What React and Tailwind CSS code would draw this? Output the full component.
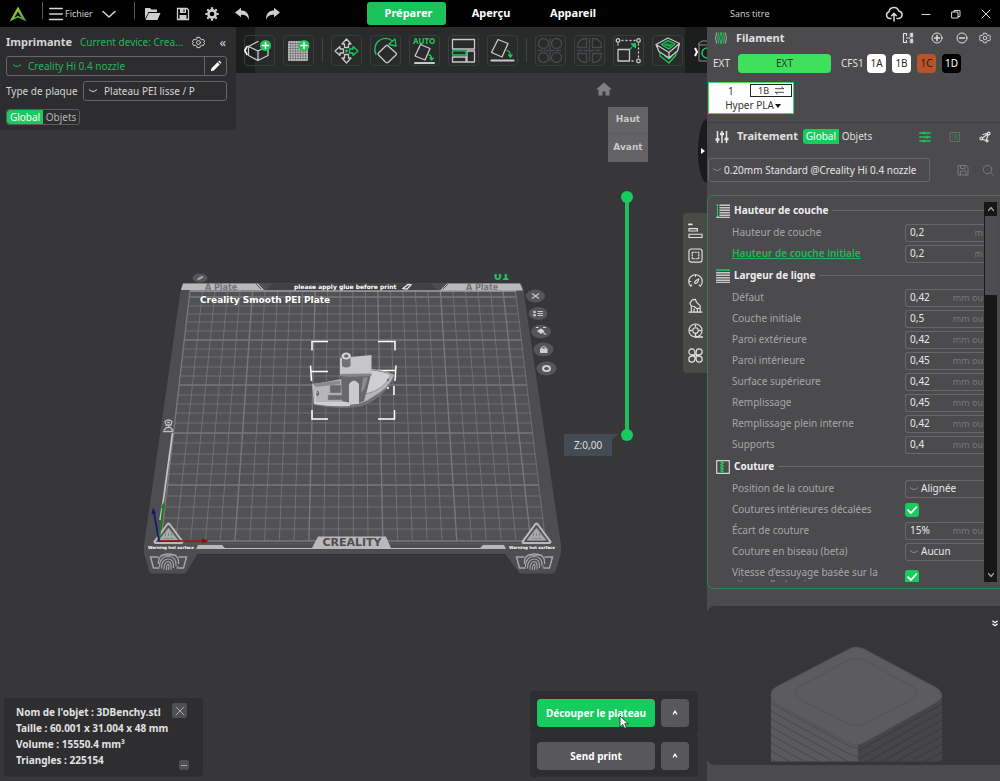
import React from "react";

function Icon({ box = 24, className = "", children, width = 1.5 }) {
  return (
    <svg
      viewBox={`0 0 ${box} ${box}`}
      className={`shrink-0 ${className}`}
      fill="none"
      stroke="currentColor"
      strokeWidth={width}
      strokeLinecap="round"
      strokeLinejoin="round"
      aria-hidden="true"
    >
      {children}
    </svg>
  );
}

const GREEN = "#1fc75c";

const Chevron = ({ className = "" }) => (
  <Icon box={12} className={className} width={1.2}>
    <path d="M1.5 4.5 Q6 9 10.5 4.5" />
  </Icon>
);

const GearIcon = ({ className = "" }) => (
  <Icon className={className} width={1.8}>
    <path d="M9.5 2.5h5l1 3 2.6 1.5 3.1-.6 2 4-2 1.6 2 1.6-2 4-3.1-.6-2.6 1.5-1 3h-5l-1-3-2.6-1.5-3.1.6-2-4 2-1.6-2-1.6 2-4 3.1.6L8.500 5.500z" />
    <circle cx="12" cy="12" r="3.600" />
  </Icon>
);

/* ---------- title bar ---------- */

function TitleBar() {
  return (
    <header className="flex h-[27px] shrink-0 items-center justify-between bg-black text-[#d8d8d8]">
      <div className="flex w-[367px] items-center">
        <svg viewBox="0 0 18 16" className="ml-[9px] h-4 w-[18px]" aria-hidden="true">
          <defs>
            <linearGradient id="brand" x1="0" y1="0" x2="1" y2="1">
              <stop offset="0" stopColor="#b5d43a" />
              <stop offset="1" stopColor="#3fa047" />
            </linearGradient>
          </defs>
          <path d="M9 .5 17.500 15.500 9 11.500 .5 15.500zM9 5.500 5.300 11.800 9 9.800 12.700 11.800z" fill="url(#brand)" fillRule="evenodd" />
        </svg>
        <span className="mb-1.5 ml-[15px] h-[17px] w-px bg-[#5a5a5a]" />
        <button className="flex items-center pl-[6px] font-['Open_Sans'] text-[9px]">
          <Icon box={14} className="h-[14px] w-[14px]" width={1.3}>
            <path d="M.7 1.500H13.300M.7 7H13.300M.7 12.500H13.300" />
          </Icon>
          <span className="ml-[2px]">Fichier</span>
          <Icon box={14} className="ml-[9px] h-[14px] w-[14px]" width={1.5}>
            <path d="M1 4.500 7 10 13 4.500" />
          </Icon>
        </button>
        <span className="mb-1.5 ml-[18px] h-[17px] w-px bg-[#5a5a5a]" />
        <div className="ml-[9px] flex items-center gap-[15px]">
          <button aria-label="Ouvrir">
            <svg viewBox="0 0 17 14" className="h-[14px] w-[17px]" fill="#cfcfcf" aria-hidden="true">
              <path d="M1 12V1.500Q1 1 1.500 1H6L7.500 2.500H13V5H4.500z" />
              <path d="M4.800 6H16.500L13.500 13H1.500z" />
            </svg>
          </button>
          <button aria-label="Enregistrer">
            <svg viewBox="0 0 14 14" className="h-[14px] w-[14px]" aria-hidden="true">
              <path d="M1.500 1.500h9.500l1.500 1.500v9.500H1.500z" fill="none" stroke="#cfcfcf" strokeWidth="1.300" />
              <path d="M4 2h6v4H4zM3.500 8h7v4h-7z" fill="#cfcfcf" />
              <path d="M7.500 2.500h1v2.500h-1z" fill="#000" />
            </svg>
          </button>
          <button aria-label="Paramètres">
            <svg viewBox="0 0 14 14" className="h-[14px] w-[14px]" fill="none" stroke="#cfcfcf" aria-hidden="true">
              <circle cx="7" cy="7" r="3.600" strokeWidth="2.600" />
              <path d="M7 .3v2M7 11.700v2M.3 7h2M11.700 7h2M2.300 2.300l1.400 1.400M10.300 10.300l1.400 1.400M2.300 11.700l1.400-1.400M10.300 3.700l1.400-1.400" strokeWidth="2.200" />
            </svg>
          </button>
          <button aria-label="Annuler">
            <svg viewBox="0 0 16 14" className="h-[14px] w-4" fill="#cfcfcf" aria-hidden="true">
              <path d="M1 5.500 7 .8V3.500C12 3.500 15 6 15 13 13.500 9 11 7.800 7 7.800V10.300z" />
            </svg>
          </button>
          <button aria-label="Rétablir">
            <svg viewBox="0 0 16 14" className="h-[14px] w-4" fill="#cfcfcf" aria-hidden="true">
              <path d="M15 5.500 9 .8V3.500C4 3.500 1 6 1 13 2.500 9 5 7.800 9 7.800V10.300z" />
            </svg>
          </button>
        </div>
      </div>

      <nav className="flex items-center text-[12px] font-bold text-white">
        <button className="h-[23px] w-[79px] rounded-[3px] bg-[#1bc15b] pl-1 text-[11px]">Préparer</button>
        <button className="w-[90px] text-[11px]">Aperçu</button>
        <button className="w-[74px] text-[11px]">Appareil</button>
      </nav>

      <div className="flex flex-1 items-center justify-between pl-[120px] pr-[9px]">
        <span className="font-['Open_Sans'] text-[9px]">Sans titre</span>
        <div className="flex items-center gap-[18px]">
          <button aria-label="Envoyer vers le nuage">
            <Icon box={18} className="h-[18px] w-[18px]" width={1.5}>
              <path d="M6 13.500H4.500A3.500 3.500 0 0 1 4 6.700 5 5 0 0 1 13.700 6 3.800 3.800 0 0 1 14 13.500H12M9 16V8.500M6.700 10.700 9 8.400l2.300 2.300" />
            </Icon>
          </button>
          <button aria-label="Réduire">
            <Icon box={10} className="h-[10px] w-[10px]" width={1}><path d="M1 5.500h8" /></Icon>
          </button>
          <button aria-label="Restaurer" className="ml-[2px]">
            <Icon box={10} className="h-[10px] w-[10px]" width={1}>
              <path d="M1 3h6v6H1zM3 3V1.500h6v6H7" />
            </Icon>
          </button>
          <button aria-label="Fermer" className="ml-[2px]">
            <Icon box={10} className="h-[10px] w-[10px]" width={1}><path d="M1 1l8 8M9 1L1 9" /></Icon>
          </button>
        </div>
      </div>
    </header>
  );
}

/* ---------- printer panel ---------- */

function ScopeToggle({ objectsBoxed }) {
  return (
    <div
      className={
        objectsBoxed
          ? "flex h-4 w-fit overflow-hidden rounded-[3px] border border-[#5b5b5d] leading-[14px]"
          : "flex h-[15px] w-fit text-[10px] leading-[15px]"
      }
    >
      <button className="w-9 rounded-l-[3px] bg-[#17cc5f] text-[10px] text-white">Global</button>
      <button className={objectsBoxed ? "w-9 text-[10px] text-[#b4b4b4]" : "w-9 text-[#dedede]"}>Objets</button>
    </div>
  );
}

function PrinterPanel() {
  return (
    <section className="h-[103px] w-[236px] shrink-0 bg-[#2d2d2f] pl-[6px] pr-[9px] pt-[6px] text-[#d5d5d5]">
      <div className="flex h-[18px] items-center">
        <h2 className="text-[11px] font-bold">Imprimante</h2>
        <span className="ml-2 text-[10px] text-[#27b35c]">Current device: Crea...</span>
        <button className="ml-auto" aria-label="Réglages imprimante"><GearIcon className="h-[13px] w-[13px]" /></button>
        <button className="ml-[14px] mr-px text-[13px] leading-none" aria-label="Replier">«</button>
      </div>
      <div className="mt-[5px] flex h-5 rounded-[3px] border border-[#666668]">
        <div className="flex flex-1 items-center pl-[5px] text-[#27b35c]">
          <Chevron className="h-[10px] w-[10px]" />
          <select aria-label="Imprimante" className="ml-[6px] flex-1 appearance-none bg-transparent text-[10px] outline-none">
            <option>Creality Hi 0.4 nozzle</option>
          </select>
        </div>
        <button className="flex w-[22px] items-center justify-center border-l border-[#666668]" aria-label="Modifier">
          <svg viewBox="0 0 12 12" className="h-3 w-3" fill="#fff" aria-hidden="true">
            <path d="M.8 11.200 1.500 8.200 7.500 2.200 9.800 4.500 3.800 10.500zM8.200 1.500 9.300.6 11.400 2.700 10.500 3.800z" />
          </svg>
        </button>
      </div>
      <div className="mt-[5px] flex h-5 items-center">
        <label htmlFor="plate" className="w-[77px] text-[10px]">Type de plaque</label>
        <div className="flex h-5 flex-1 items-center rounded-[3px] border border-[#666668] pl-[4px]">
          <Chevron className="h-[10px] w-[10px]" />
          <select id="plate" className="ml-[6px] flex-1 appearance-none bg-transparent text-[10px] outline-none">
            <option>Plateau PEI lisse / P</option>
          </select>
        </div>
      </div>
      <div className="mt-[8px]"><ScopeToggle objectsBoxed /></div>
    </section>
  );
}

/* ---------- 3D toolbar ---------- */

const Plus = ({ x, y }) => (
  <g>
    <circle cx={x} cy={y} r="5.500" fill={GREEN} stroke="none" />
    <path d={`M${x - 3} ${y}h6M${x} ${y - 3}v6`} stroke="#fff" strokeWidth="1.500" />
  </g>
);

const four = [[8.500, 8.500], [21.500, 8.500], [8.500, 22.500], [21.500, 22.500]];

const TOOLS = [
  {
    name: "Ajouter un objet",
    draw: (
      <>
        <path d="M4.500 11.500 14 6.500M4.500 11.500v9l9.500 5 10-5v-7M4.500 11.500l9.500 4.500 5-2.500M14 16v9.500" />
        <Plus x={21.500} y={10.500} />
        <path d="M3 11.500 .8 15.500 3 19.500" stroke="#fff" strokeWidth="1.600" />
      </>
    ),
  },
  {
    name: "Ajouter un plateau",
    draw: (
      <>
        <rect x="5" y="6" width="20" height="20" rx="1.500" fill="#bdbdbd" stroke="none" />
        <path d="M7.500 6v20M10 6v20M12.500 6v20M15 6v20M17.500 6v20M20 6v20M22.500 6v20M5 8.500h20M5 11h20M5 13.500h20M5 16h20M5 18.500h20M5 21h20M5 23.500h20" stroke="#555" strokeWidth=".5" />
        <Plus x={21} y={10.500} />
      </>
    ),
    end: true,
  },
  {
    name: "Déplacer",
    draw: (
      <>
        <path d="M15.500 4l4.500 5h-2.500v3.500h-4V9H11zM15.500 28l4.500-5h-2.500v-3.500h-4V23H11zM4 16l5-4.500V14h3.500v4H9v2.500z" />
        <path d="M27 16l-5-4.500V14h-3.500v4H22v2.500z" stroke={GREEN} />
        <path d="M14.500 16h2M15.500 15v2" stroke={GREEN} />
      </>
    ),
  },
  {
    name: "Pivoter",
    draw: (
      <>
        <path d="M17.500 10.500 26 18Q27 19 26 20L18 27.500Q17 28.200 16 27.500L8.500 20Q7.500 19 8.500 18L16 10.700Q16.700 10 17.500 10.500z" />
        <path d="M6 19.500C3.500 14 5 8 10 5 14 3 19 3 22.500 6M25 4 18.700 9.300 26 11z" stroke={GREEN} />
      </>
    ),
  },
  {
    name: "Orientation automatique",
    draw: (
      <>
        <text x="4" y="9" fontSize="8" fontWeight="700" fill={GREEN} stroke="none" fontFamily="Noto Sans">AUTO</text>
        <path d="M11.500 9.500 21 13.500 16 25 6 21z" />
        <path d="M6 28h19" strokeWidth="2" />
        <path d="M20 20q2.500 0 2.500 4M21 23l1.700 2 1.500-2" stroke={GREEN} />
      </>
    ),
  },
  {
    name: "Organiser",
    draw: (
      <>
        <path d="M4.500 4.500h22v9.500h-22zM19 16h7.500v11H19zM4.500 22H18v5H4.500z" />
        <path d="M4.500 15.800H18V20H4.500z" stroke={GREEN} />
      </>
    ),
  },
  {
    name: "Poser sur une face",
    draw: (
      <>
        <path d="M11 4.500 21 8.500 15 22 4.500 17.500z" />
        <path d="M4.500 25.500h22" strokeWidth="2.200" />
        <path d="M20 15.500q3.500 1 3.500 6M21.500 20l2 2.200 1.500-2.400" stroke={GREEN} />
      </>
    ),
    end: true,
  },
  {
    name: "Séparer en objets",
    dim: true,
    draw: (
      <>
        {four.map(([x, y]) => <circle key={`${x}-${y}`} cx={x} cy={y} r="5" />)}
        <path d="M15 4v23M3.500 15.500h23" strokeDasharray="4 2" />
      </>
    ),
  },
  {
    name: "Séparer en pièces",
    dim: true,
    draw: (
      <>
        <path d="M12.500 3.500V12.500H3.500Q3.500 3.500 12.500 3.500zM18.500 3.500V12.500H27.500Q27.500 3.500 18.500 3.500zM12.500 27.500V18.500H3.500Q3.500 27.500 12.500 27.500zM18.500 27.500V18.500H27.500Q27.500 27.500 18.500 27.500z" />
        <path d="M15.500 4v23M4 15.500h23" strokeDasharray="4 2" />
      </>
    ),
  },
  {
    name: "Mettre à l'échelle",
    draw: (
      <>
        <path d="M5 14.500h11.500V26H5z" />
        <circle cx="5" cy="5.500" r="1.800" /><circle cx="25.500" cy="5.500" r="1.800" /><circle cx="25.500" cy="26" r="1.800" />
        <path d="M9 5.500h13M25.500 9v13M19 26h3M5 9v3" strokeDasharray="1 3" />
        <path d="M17 14 21.500 10" stroke={GREEN} strokeDasharray="2 2" />
        <path d="M22.500 9v3.500L18.500 9z" fill={GREEN} stroke={GREEN} />
      </>
    ),
  },
  {
    name: "Calques",
    draw: (
      <>
        <path d="M8 21l9 7 7-8M8 21v-3M24 20v-3M13 21l4 3 3-3" stroke={GREEN} />
        <path d="M4 9.500 16 3 27.500 8.500 17 17.500zM4 9.500l3 7 10 6.500 8.500-7 2-7.500M17 17.500V23" />
        <path d="M9.500 9.500l6.500-4 7 3.500-6 5z" fill="#17552f" stroke={GREEN} />
        <path d="M13 10l2-.6 2 1.400 2-1" stroke={GREEN} />
      </>
    ),
  },
];

function Toolbar() {
  return (
    <div className="relative flex h-[46px] min-w-0 flex-1 items-center gap-2 overflow-hidden bg-[#292a2a] pl-[8px] text-[#c9c9c9]">
      <span className="absolute inset-y-0 left-0 w-[19px] bg-[#1c1d1d]" />
      {TOOLS.map((tool) => (
        <React.Fragment key={tool.name}>
          <button
            aria-label={tool.name}
            className={`relative h-[31px] w-[31px] shrink-0 rounded-[4px] border border-[#3b3c3d] ${tool.dim ? "text-[#47494c]" : ""}`}
          >
            <Icon box={31} className="-ml-px -mt-px h-[31px] w-[31px]" width={1.3}>{tool.draw}</Icon>
          </button>
          {tool.end && <span className="h-6 w-px shrink-0 bg-[#434445]" />}
        </React.Fragment>
      ))}
      <button aria-label="Plus d'outils" className="-ml-[6px] flex h-full w-[23px] shrink-0 items-center bg-[#1c1d1d] pl-[9px]">
        <svg viewBox="0 0 14 31" className="h-[31px] w-[14px]" fill="none" aria-hidden="true">
          <path d="M4 9 8 6h8M5 9v17h12M5 10h10" stroke="#8d8d8d" />
          <circle cx="13" cy="18" r="5" stroke={GREEN} strokeWidth="1.500" />
          <path d="M1 13l2 4-2 4" stroke="#fff" strokeWidth="2" />
        </svg>
      </button>
    </div>
  );
}

/* ---------- build plate drawing ---------- */

const ROWS = [297, 306, 314, 322, 331, 340, 349, 357, 367, 376, 385, 395, 404, 413, 423, 433, 443, 454, 464, 474, 485, 496, 507, 518, 529, 541];
const COLS = Array.from({ length: 27 }, (_, i) => i);
const leftAt = (y) => 190 - ((y - 291) * 29) / 250;
const rightAt = (y) => 515.5 + ((y - 291) * 30) / 250;

function HotSign({ x }) {
  return (
    <g transform={`translate(${x} 0)`} strokeLinejoin="round">
      <path d="M0 524.500 13 542H-13z" fill="#5a5a5c" stroke="#b9b9bb" strokeWidth="4" />
      <path d="M0 525 12 541.500H-12z" fill="#5c5c5e" stroke="#4b4b4d" strokeWidth="1" />
      <path d="M0 528.500 9 540H-9z" fill="#a9a9ab" stroke="#a9a9ab" />
      <path d="M-3 533v3M0 533v3M3 533v3M-5 538.500H5" stroke="#7c7c7e" strokeWidth=".8" />
    </g>
  );
}

function Finger({ x }) {
  return (
    <g transform={`translate(${x} 562)`} fill="none" stroke="#a5a5ad">
      <path d="M-10-5H-18L-15 6H-9M10-5H18L15 6H9" strokeWidth="1.500" />
      <path d="M-10 2Q-11-8 0-8 11-8 10 2" strokeWidth="1.300" />
      <path d="M-9 5Q-9-5.500 0-5.500 8-5.500 7.500 4" strokeWidth="1.200" />
      <path d="M-7 6.500Q-7-3 0-3 5.500-3 5 6" strokeWidth="1.200" />
      <path d="M-4.500 7.500Q-4.500-.5 0-.5 3-.5 2.500 7.500M-2 8Q-2 2 0 2 .8 3 0 8" strokeWidth="1.100" />
      <path d="M8 6.500 9.500 3.500M-8-6 8-7" strokeWidth=".8" />
    </g>
  );
}

function BuildPlate() {
  return (
    <svg viewBox="0 27 707 754" className="absolute inset-0 h-full w-full" aria-label="Plateau d'impression">
      <path d="M187 283H518Q522 283 523 287L561 545V553L556 570Q555 573.500 551 573.500H521Q519 573.500 518 571L506 555H197L187 571Q186 573.500 183 573.500H153Q150 573.500 149 571L144 553V545L181 288Q182 283 187 283z" fill="#4e4e50" />
      <path d="M197 554.500H506" stroke="#2f2f31" />
      <path d="M191 291H515.500L545.500 541H161z" fill="#525254" />
      <g stroke="#77777c" fill="none">
        {ROWS.map((y, i) => (
          <path key={y} d={`M${leftAt(y)} ${y}H${rightAt(y)}`} strokeWidth={i % 5 === 0 ? 1.3 : 0.8} />
        ))}
        {COLS.map((i) => (
          <path key={i} d={`M${190 + i * 12.52} 291L${161 + i * 14.79} 541`} strokeWidth={i % 5 === 0 ? 1.4 : 0.8} />
        ))}
      </g>
      <path d="M190 291H516" stroke="#c4c4c6" strokeWidth="1.200" />
      <path d="M183 283.500H258L264 290H181z M447 283.500H520L523 290.500H440z" fill="#b9b9bb" />
      <path d="M272 283.500H430L438 290H266z" fill="#414143" />
      <path d="M256 284l5 5M261 284l5 5M448 284l-5 5" stroke="#59595b" />
      <g fontFamily="DejaVu Sans" fontWeight="700">
        <text x="205" y="290" fontSize="8" fill="#727274">A Plate</text>
        <text x="466" y="290" fontSize="8" fill="#727274">A Plate</text>
        <text x="294" y="289" fontSize="6" fill="#fff">please apply glue before print</text>
        <text x="200" y="303" fontSize="9" fill="#fff">Creality Smooth PEI Plate</text>
      </g>
      <path d="M403 288.500 408 284.500 411 285 407 289z" fill="none" stroke="#eee" strokeWidth="1.200" />
      <clipPath id="below"><path d="M490 274h25v8h-25z" /></clipPath>
      <text x="494" y="280" fontSize="11" fontWeight="700" fontFamily="DejaVu Sans" fill="#1fc75c" clipPath="url(#below)">01</text>

      <path d="M172.500 433 163 503 160 520" stroke="#c2c2c4" strokeWidth="1.800" fill="none" />
      <g stroke="#bdbdbf" fill="none" strokeWidth="1.300">
        <path d="M165 421.500Q168.500 418.500 172 421.500L171 425H166zM167 422.500h3" />
        <path d="M168.500 425v2.500M164 430l2.500-2.500h4l2.500 3M163 431.500h10" />
      </g>

      <path d="M161 544H546" stroke="#5e5e60" />
      <path d="M198 545H222L225 548H312L318 536.500H386L391 548H480L483 545H504L506 549H196z" fill="#b9b9bb" />
      <path d="M225 545.500H312M391 545.500H480" stroke="#4e4e50" strokeWidth="3" />
      <text x="352" y="546" fontSize="11" fontWeight="700" fontFamily="DejaVu Sans" textAnchor="middle" fill="#4e4e50">CREALITY</text>
      <HotSign x={168.500} />
      <HotSign x={536.500} />
      <g fontFamily="DejaVu Sans" fontWeight="700" fontSize="4" fill="#fff" textAnchor="middle">
        <text x="171" y="549">Warning hot surface</text>
        <text x="532" y="549">Warning hot surface</text>
      </g>
      <Finger x={168.500} />
      <Finger x={534.500} />

      <path d="M159 541H203" stroke="#8c1010" strokeWidth="1.600" />
      <path d="M202 538.500 209 541 202 543.500z" fill="#8c1010" />
      <path d="M159 541 163 507" stroke="#188018" strokeWidth="1.600" />
      <path d="M161 508 163.500 502 165.500 508z" fill="#188018" />
      <path d="M159 541 154 513" stroke="#14147a" strokeWidth="1.600" />
      <path d="M151.500 514 153 507.500 156 513.500z" fill="#14147a" />

      <g stroke="#fff" strokeWidth="1.500" fill="none">
        <path d="M312 350.500V341.500H328M378 341.500H395V350.500" />
        <path d="M310.500 365.500 311.500 381M311 371.500H328M378 370.500H396M396 365.500 395 381M394 386V395" />
        <path d="M312 410V419H328M378 419H394.500V410" />
      </g>

      <path d="M313 400 314 405Q340 410 361 406.500 375 402 388 388L394 378 394 374z" fill="#727274" />
      <path d="M312 384 326 382 341 379 372 369Q386 370 394 375 389 388 374 396 364 404 350 405 330 406 314 404z" fill="#b6b6b8" />
      <path d="M371 370Q384 371 391 375 384 390 366 394z" fill="#cfcfd1" stroke="#919193" strokeWidth="1" />
      <path d="M313 384 340 380.500V384L316 387z" fill="#8b8b8d" />
      <path d="M316 388V402H350V406Q330 407 314 404z" fill="#d0d0d2" />
      <path d="M330 385h11v8h-11zM328 395h15v5h-15z" fill="#69696b" stroke="#9b9b9d" strokeWidth=".6" />
      <path d="M341 375 350 376 371 374 364 401 356 404 342 401z" fill="#68686a" />
      <path d="M349 384Q354 377 359 384V404H349z" fill="#cacacc" />
      <path d="M363 378 368 377 364 390 361 392z" fill="#8d8d8f" />
      <path d="M340 358 371.500 355V374L350 375.500 340 374z" fill="#c6c6c8" />
      <path d="M340 374 371.500 373.500V376L350 377 340 376z" fill="#858587" />
      <path d="M342 356V366Q346 369 350.500 366V356z" fill="#717173" />
      <ellipse cx="346.200" cy="356" rx="4.800" ry="3.500" fill="#d0d0d2" />
      <ellipse cx="346.200" cy="356" rx="2.200" ry="1.500" fill="#666668" />
      <path d="M317 391q3 2 0 5M316 394h3" stroke="#666668" strokeWidth="1.300" fill="none" />
      <circle cx="388" cy="380" r="1.300" fill="#777779" /><circle cx="388" cy="388" r="1" fill="#fff" />

      <g fill="#565658">
        <ellipse cx="200" cy="278" rx="7.500" ry="4.500" />
        <ellipse cx="535.500" cy="296" rx="9.500" ry="6.500" />
        <ellipse cx="538" cy="313.500" rx="9.500" ry="6.500" />
        <ellipse cx="541" cy="331.500" rx="10" ry="6.800" />
        <ellipse cx="543.500" cy="349.500" rx="10" ry="7" />
        <ellipse cx="546.500" cy="368.500" rx="10" ry="7" />
      </g>
      <path d="M197 280 198 278 202 276 204 277 200 279.500z" fill="#a9a9ab" />
      <path d="M532 293.500 539 298.500M539 293.500 532 298.500" stroke="#c6c6c8" strokeWidth="1.300" />
      <path d="M533.500 311.300h2v1.500h-2zM533.500 314.500h2v1.500h-2z" fill="#c6c6c8" stroke="#c6c6c8" strokeWidth=".8" />
      <path d="M537.500 311.500h5.500M537.500 313.500h5.500M537.500 315.500h5.500" stroke="#c6c6c8" strokeWidth="1" />
      <path d="M537 331 541 328.500 544.500 331 541 334z" fill="#d6d6d8" />
      <path d="M543 332.500l3 2M536 327.500h2.500M543 327.500h3" stroke="#d6d6d8" strokeWidth="1.100" />
      <path d="M540 348.500h7.500v4.500H540z" fill="#d0d0d2" />
      <path d="M541.500 349v-1.500q2.200-2 4.400 0V349" stroke="#d0d0d2" strokeWidth="1" fill="none" />
      <ellipse cx="546.500" cy="368.500" rx="3.500" ry="2.500" fill="none" stroke="#d0d0d2" strokeWidth="2" />
    </svg>
  );
}

/* ---------- viewport ---------- */

const SIDE_TOOLS = [
  ["Hauteur variable", <><path d="M1 1.500h3" strokeWidth="2" /><path d="M1 6h9v2.500H1zM1 12h14v3.500H1z" /></>],
  ["Bordure", <><rect x="1" y="1" width="14" height="14" rx="2.500" /><path d="M4.500 4.500h7v7h-7z" strokeDasharray="1.500 1.500" /></>],
  ["Vitesse", <><path d="M2.800 14A7.200 7.200 0 1 1 13.200 14M2.800 14l1.200-1.200M13.200 14l-1.200-1.200" /><path d="M7 10.500Q7 8.500 11.500 6.500 10.500 10.500 8.500 11 7.300 11.200 7 10.500z" /><path d="M8 2v1.500M1.500 9H3" /></>],
  ["Support", <><path d="M1 15h14M3.500 14.500V8.500L2 5.500 4.500 2 8 1.500 9 4.500 13 8.500V14.500M3.500 8.500l3 .5 3 2.500 3.500-1M6.500 14.500V11.500M10 14.500V12" /></>],
  ["Bobine", <><circle cx="8" cy="8" r="7" /><circle cx="8" cy="8" r="3" /><path d="M8 2.500v1M8 12.500v1M2.500 8h1M12.500 8h1M8 15h7.500" strokeWidth="1.600" /></>],
  ["Ventilateur", <><path d="M7.300 7.300H4.500A3.200 3.200 0 1 1 7.300 4zM8.700 7.300V4A3.200 3.200 0 1 1 12 7.300zM7.300 8.700V12A3.200 3.200 0 1 1 4 8.700zM8.700 8.700H12A3.200 3.200 0 1 1 8.700 12z" /></>],
];

function LayerSlider() {
  const thumb =
    "pointer-events-none absolute inset-0 h-full w-3 appearance-none bg-transparent outline-none [writing-mode:vertical-lr] [direction:rtl] [&::-webkit-slider-thumb]:pointer-events-auto [&::-webkit-slider-thumb]:h-3 [&::-webkit-slider-thumb]:w-3 [&::-webkit-slider-thumb]:appearance-none [&::-webkit-slider-thumb]:rounded-full [&::-webkit-slider-thumb]:bg-[#17cc5f]";
  return (
    <div className="absolute right-[74px] top-[164px] flex h-[250px] w-3 justify-center">
      <span className="my-1 w-1 bg-[#21bd5c]" />
      <input type="range" aria-label="Couche supérieure" min="0" max="48" defaultValue="48" className={thumb} />
      <input type="range" aria-label="Couche inférieure" min="0" max="48" defaultValue="0" className={thumb} />
      <div className="absolute bottom-[-15px] right-[21px] flex h-[22px] w-12 items-center justify-center bg-[#434c54] text-[10px] text-[#dedede]">
        Z:0,00
        <svg viewBox="0 0 7 6" className="absolute -right-[7px] top-0 h-[6px] w-[7px]" fill="#434c54" aria-hidden="true"><path d="M0 0H7L0 5z" /></svg>
      </div>
    </div>
  );
}

function ObjectInfo() {
  return (
    <section className="ml-1 flex h-[79px] w-[199px] justify-between rounded-[4px] bg-[#2e2e30] pb-1 pl-[12px] pt-[5px] text-[10px] font-bold leading-4 text-[#e2e2e2]">
      <div className="whitespace-nowrap pt-px">
        <p>Nom de l'objet : 3DBenchy.stl</p>
        <p>Taille : 60.001 x 31.004 x 48 mm</p>
        <p>Volume : 15550.4 mm³</p>
        <p>Triangles : 225154</p>
      </div>
      <div className="mr-[14px] flex flex-col items-end justify-between pb-[3px]">
        <button aria-label="Fermer" className="mr-[2px] flex h-[15px] w-[15px] items-center justify-center rounded-[2px] bg-[#4d4f52] text-[#a8a8a8]">
          <Icon box={10} className="h-[10px] w-[10px]" width={1}><path d="M1 1l8 8M9 1L1 9" /></Icon>
        </button>
        <button aria-label="Réduire" className="flex h-[10px] w-[10px] items-center justify-center rounded-[2px] bg-[#4d4f52]">
          <span className="h-px w-[6px] bg-[#a8a8a8]" />
        </button>
      </div>
    </section>
  );
}

function ActionRow({ label, primary }) {
  return (
    <div className="flex h-[43px] gap-[6px] rounded-[4px] bg-[#2e2e30] px-[7px] pt-[8px] text-[10px] font-bold text-white">
      <button className={`h-7 w-[118px] rounded-[4px] ${primary ? "bg-[#17cc5f]" : "bg-[#58585b]"}`}>{label}</button>
      <button aria-label={`Options : ${label}`} className="flex h-7 w-7 items-center justify-center rounded-[4px] bg-[#58585b]">
        <Icon box={8} className="h-2 w-2" width={1.3}><path d="M2.300 5 4 2l1.700 3" /></Icon>
      </button>
    </div>
  );
}

function Viewport() {
  return (
    <main className="relative min-w-0 flex-1 overflow-hidden bg-[#373739]">
      <BuildPlate />
      <div className="relative flex h-full flex-col justify-between">
        <div className="flex items-start">
          <PrinterPanel />
          <Toolbar />
        </div>
        <div className="flex items-end justify-between pb-1">
          <ObjectInfo />
          <div className="mr-[9px] flex w-[168px] flex-col">
            <ActionRow label="Découper le plateau" primary />
            <ActionRow label="Send print" />
          </div>
        </div>
      </div>

      <button aria-label="Vue d'origine" className="absolute right-[95px] top-[55px]">
        <svg viewBox="0 0 16 14" className="h-[14px] w-4" fill="#808082" aria-hidden="true">
          <path d="M8 .5 16 7.500H13.500V13.500H9.500V9.500H6.500V13.500H2.500V7.500H0z" />
        </svg>
      </button>
      <div className="absolute right-[59px] top-[80px] flex w-10 flex-col bg-[#636365] font-['DejaVu_Sans'] text-[9px] font-bold text-[#c8c8c8]">
        <button className="h-[27px] border-b border-[#5d5d5f]">Haut</button>
        <button className="h-7">Avant</button>
      </div>
      <LayerSlider />
      <div className="absolute right-0 top-[186px] flex w-6 flex-col items-center gap-[10px] rounded-l-[4px] bg-[#4a4b46] py-[10px] text-[#e4e4e4]">
        {SIDE_TOOLS.map(([name, draw]) => (
          <button key={name} aria-label={name}>
            <Icon box={16} className="block h-[15px] w-[15px]" width={1.2}>{draw}</Icon>
          </button>
        ))}
      </div>
      <button aria-label="Replier le panneau" className="absolute right-0 top-[92px] flex h-[64px] w-[9px] items-center justify-center bg-[#1b1b1d] [border-radius:100%_0_0_100%/50%_0_0_50%]">
        <svg viewBox="0 0 4 6" className="h-[6px] w-1" fill="#fff" aria-hidden="true"><path d="M0 0 4 3 0 6z" /></svg>
      </button>
      <svg viewBox="0 0 10 14" className="absolute bottom-[52px] right-[78px] h-[14px] w-[10px]" aria-hidden="true">
        <path d="M1 1V12L3.800 9.500 5.500 13.300 7.500 12.400 5.800 8.700H9.300z" fill="#fff" stroke="#222" strokeWidth=".8" />
      </svg>
    </main>
  );
}

/* ---------- right sidebar ---------- */

const SLOTS = [
  ["1A", "bg-white text-[#2a2a2a]"],
  ["1B", "bg-white text-[#2a2a2a]"],
  ["1C", "bg-[#b9532a] text-[#2a1a14]"],
  ["1D", "bg-black text-white"],
];

function FilamentSection() {
  return (
    <section className="h-24 border-b border-[#3f3f41] text-[#e0e0e0]">
      <div className="flex h-[22px] items-center pl-[8px] pr-[9px]">
        <Icon box={12} className="h-3 w-3" width={1}>
          <path d="M1.500 .8Q-.5 6 1.500 11.200M10.500 .8Q12.500 6 10.500 11.200" stroke="#aaa" />
          <path d="M3.500 .8Q1.800 6 3.500 11.200M5.500 .8Q3.800 6 5.500 11.200M8.500 .8Q10.200 6 8.500 11.200M6.500 .8Q8.200 6 6.500 11.200" stroke={GREEN} />
        </Icon>
        <h2 className="ml-[9px] text-[11px] font-bold">Filament</h2>
        <div className="ml-auto flex items-center">
          <button aria-label="Synchroniser">
            <Icon box={12} className="h-3 w-3" width={1.2}>
              <path d="M4.500 1.500H1.500v9H4.500V8.500M4.500 1.500V3.500M4.500 6H8" />
              <path d="M8.500 1.200h2.300v3.300H8.500zM8.500 7.500h2.300v3.300H8.500zM10 4v4" fill="currentColor" strokeWidth=".7" />
            </Icon>
          </button>
          <button aria-label="Ajouter un filament" className="ml-[17px]">
            <Icon box={12} className="h-3 w-3" width={1}><circle cx="6" cy="6" r="5" /><path d="M3.500 6h5M6 3.500v5" strokeWidth="1.500" /></Icon>
          </button>
          <button aria-label="Retirer un filament" className="ml-[13px]">
            <Icon box={12} className="h-3 w-3" width={1}><circle cx="6" cy="6" r="5" /><path d="M3.500 6h5" strokeWidth="1.500" /></Icon>
          </button>
          <button aria-label="Réglages filament" className="ml-[11px]"><GearIcon className="h-3 w-3" /></button>
        </div>
      </div>
      <div className="mt-[5px] flex h-[19px] items-center pl-[6px] text-[10px]">
        <span className="w-[25px]">EXT</span>
        <button className="h-[19px] w-[93px] rounded-[4px] bg-[#3fe05b] text-[#1d3a24]">EXT</button>
        <span className="ml-[10px] w-[26px]">CFS1</span>
        <div className="flex gap-[6px]">
          {SLOTS.map(([name, tone]) => (
            <button key={name} className={`h-[19px] w-[19px] rounded-[4px] text-[10px] ${tone}`}>{name}</button>
          ))}
        </div>
      </div>
      <div className="ml-px mt-[9px] h-8 w-[86px] border border-[#43d867] bg-white text-[10px] text-[#333]">
        <div className="flex h-[15px] items-start justify-between pl-[19px] pr-[1px] pt-[1px]">
          <span className="leading-[14px]">1</span>
          <button className="flex h-[13px] w-[42px] items-center justify-center gap-[6px] border border-[#222] text-[9px] leading-none">
            1B
            <Icon box={10} className="h-[9px] w-[9px]" width={1}><path d="M.5 3h9M7.500 1l2 2M9.500 7h-9M2.500 9l-2-2" /></Icon>
          </button>
        </div>
        <button className="flex h-[15px] w-full items-center justify-center pl-1 text-[10px]">
          Hyper PLA
          <svg viewBox="0 0 6 4" className="ml-px h-1 w-[6px]" fill="#111" aria-hidden="true"><path d="M0 0H6L3 4z" /></svg>
        </button>
      </div>
    </section>
  );
}

function ProcessHeader() {
  return (
    <section className="h-[72px] text-[#e0e0e0]">
      <div className="flex h-[27px] items-center pl-2 pr-[9px]">
        <svg viewBox="0 0 14 14" className="h-[14px] w-[14px]" fill="none" stroke="#e6e6e6" strokeWidth="1.500" aria-hidden="true">
          <path d="M2.500 1v12M7 1v12M11.500 1v12" />
          <path d="M.5 9.500h4M5 4h4M9.500 9h4" strokeWidth="2.500" />
        </svg>
        <h2 className="ml-2 text-[11px] font-bold">Traitement</h2>
        <div className="ml-[5px]"><ScopeToggle /></div>
        <div className="ml-auto flex items-center gap-[18px]">
          <button aria-label="Mode avancé">
            <Icon box={12} className="h-3 w-3 text-[#1fc75c]" width={1.3}>
              <path d="M.7 2h10.600M.7 6h10.600M.7 10h10.600M5 .8v2.400M8 4.800v2.400M5 8.800v2.400" />
            </Icon>
          </button>
          <button aria-label="Liste">
            <Icon box={12} className="h-3 w-3 text-[#2a8a50]" width={1}>
              <path d="M1.500 1.500h9v9h-9z" stroke="#6b6b6d" /><path d="M3.500 4h.1M5.500 4h3M3.500 6h.1M5.500 6h3M3.500 8h.1M5.500 8h3" />
            </Icon>
          </button>
          <button aria-label="Comparer">
            <Icon box={12} className="h-3 w-3" width={1.2}>
              <path d="M4 3.500 8 2.500M3.500 8.300 7 9.500M9 4 7.500 8.500M4 6.500 8.300 3.500" />
              <circle cx="9.700" cy="2.500" r="1.300" /><circle cx="2.300" cy="7.500" r="1.300" /><circle cx="8" cy="9.800" r="1" />
            </Icon>
          </button>
        </div>
      </div>
      <div className="mt-[8px] flex h-6 items-center pl-px pr-[6px]">
        <div className="flex h-6 w-[222px] items-center rounded-[3px] border border-[#68686a] pl-[3px]">
          <Chevron className="h-[10px] w-[10px] text-[#8a8a8c]" />
          <select aria-label="Profil de traitement" className="ml-[2px] flex-1 appearance-none bg-transparent text-[10px] text-[#e4e4e4] outline-none">
            <option>0.20mm Standard @Creality Hi 0.4 nozzle</option>
          </select>
        </div>
        <button aria-label="Enregistrer le profil" className="ml-auto text-[#7a7a7c]">
          <Icon box={12} className="h-3 w-3" width={1}><path d="M1.500 1.500h8l1.500 1.500v8h-9.500zM3.500 1.500v3h4.500v-3M3.500 11V7h5.500v4" /></Icon>
        </button>
        <button aria-label="Rechercher" className="ml-[13px] text-[#7a7a7c]">
          <Icon box={12} className="h-3 w-3" width={1}><circle cx="5.500" cy="5.500" r="4.200" /><path d="M8.500 8.500 11.300 11.300" /></Icon>
        </button>
      </div>
    </section>
  );
}

const layers = (y0) => [0, 1, 2, 3, 4].map((i) => <path key={i} d={`M4 ${y0 + i * 2.500}H13.500`} stroke="#c9c9c9" strokeWidth="1.600" />);

const SECTIONS = [
  {
    title: "Hauteur de couche",
    icon: <><path d="M1.500 1v12M.5 1h2M.5 13h2" stroke={GREEN} strokeWidth="1" />{layers(1.200)}<path d="M1 13.500h12.500" stroke="#c9c9c9" /></>,
    rows: [
      { label: "Hauteur de couche", value: "0,2", unit: "m" },
      { label: "Hauteur de couche initiale", value: "0,2", unit: "m", changed: true },
    ],
  },
  {
    title: "Largeur de ligne",
    icon: (
      <>
        <path d="M.5 1h13" stroke={GREEN} strokeWidth="1.600" />
        <path d="M.5 3.800h13M.5 6.300h13M.5 8.800h13M.5 11.300h13M.5 13.500h13" stroke="#c9c9c9" strokeWidth="1.500" />
      </>
    ),
    rows: [
      { label: "Défaut", value: "0,42", unit: "mm ou" },
      { label: "Couche initiale", value: "0,5", unit: "mm ou" },
      { label: "Paroi extérieure", value: "0,42", unit: "mm ou" },
      { label: "Paroi intérieure", value: "0,45", unit: "mm ou" },
      { label: "Surface supérieure", value: "0,42", unit: "mm ou" },
      { label: "Remplissage", value: "0,45", unit: "mm ou" },
      { label: "Remplissage plein interne", value: "0,42", unit: "mm ou" },
      { label: "Supports", value: "0,4", unit: "mm ou" },
    ],
  },
  {
    title: "Couture",
    icon: (
      <>
        <rect x=".7" y=".7" width="12.600" height="12.600" stroke="#d4d4d4" strokeWidth="1.200" />
        <path d="M5 1.500l2 1.500-2 1.500 2 1.500-2 1.500 2 1.500-2 1.500 2 1.500" stroke={GREEN} strokeWidth="1.800" />
      </>
    ),
    rows: [
      { label: "Position de la couture", select: "Alignée" },
      { label: "Coutures intérieures décalées", check: true },
      { label: "Écart de couture", value: "15%", unit: "mm ou" },
      { label: "Couture en biseau (beta)", select: "Aucun" },
      { label: "Vitesse d’essuyage basée sur la vitesse d’extrusion", check: true, tall: true },
    ],
  },
];

function Control({ row, id }) {
  if (row.check) {
    return (
      <span className={`relative h-[14px] w-[14px] ${row.tall ? "mt-2" : ""}`}>
        <input id={id} type="checkbox" defaultChecked className="peer block h-[14px] w-[14px] appearance-none rounded-[3px] border border-[#77777a] checked:border-0 checked:bg-[#17cc5f]" />
        <Icon box={14} className="pointer-events-none absolute inset-0 hidden h-[14px] w-[14px] text-white peer-checked:block" width={1.8}>
          <path d="M3 7.200 6 10 11.300 4.200" />
        </Icon>
      </span>
    );
  }
  return (
    <div className="flex h-[18px] min-w-0 flex-1 items-center rounded-l-[3px] border border-r-0 border-[#68686a] text-[10px] text-[#e8e8e8]">
      {row.select ? (
        <>
          <Chevron className="ml-[3px] h-[10px] w-[10px] text-[#8a8a8c]" />
          <select id={id} defaultValue={row.select} className="ml-[2px] w-[60px] appearance-none bg-transparent outline-none">
            <option>{row.select}</option>
          </select>
        </>
      ) : (
        <>
          <input id={id} type="text" defaultValue={row.value} className="w-0 flex-1 bg-transparent pl-[4px] outline-none" />
          <span className="mr-px whitespace-nowrap text-[9px] text-[#77777a]">{row.unit}</span>
        </>
      )}
    </div>
  );
}

function Settings() {
  return (
    <section className="flex min-h-0 flex-1 rounded-l-[6px] border border-r-0 border-[#2f7d50] pb-[6px] pr-[3px] pt-[3px]">
      <form className="min-w-0 flex-1 overflow-hidden">
        {SECTIONS.map((section, s) => (
          <div key={section.title} role="group" aria-labelledby={`section-${s}`}>
            <div className="flex h-[23px] items-center pl-2">
              <Icon box={14} className="h-[14px] w-[14px]">{section.icon}</Icon>
              <h3 id={`section-${s}`} className="ml-1 text-[10px] font-bold text-[#ededed]">{section.title}</h3>
              <span className="ml-1 h-px flex-1 bg-[#68686a]" />
            </div>
            {section.rows.map((row, r) => {
              const id = `opt-${s}-${r}`;
              return (
                <div key={id} className={`flex pl-6 ${row.tall ? "h-8 items-start" : "h-[21px] items-center"}`}>
                  <label
                    htmlFor={id}
                    className={`w-[173px] shrink-0 text-[10px] ${row.tall ? "pr-2 pt-[4px] leading-3" : "whitespace-nowrap"} ${
                      row.changed ? "font-semibold text-[#20b95a] underline" : "text-[#a6a6a8]"
                    }`}
                  >
                    {row.label}
                  </label>
                  <Control row={row} id={id} />
                </div>
              );
            })}
          </div>
        ))}
      </form>
      <div className="mt-[3px] flex w-[13px] shrink-0 flex-col items-center bg-[#171717] text-[#a0a0a0]">
        <button aria-label="Défiler vers le haut" className="flex h-[14px] items-center">
          <Icon box={8} className="h-2 w-2" width={1.2}><path d="M1.500 5.500 4 2.500l2.500 3" /></Icon>
        </button>
        <span className="h-[79px] w-3 bg-[#4d4d4f]" />
        <button aria-label="Défiler vers le bas" className="mt-auto flex h-[14px] items-center">
          <Icon box={8} className="h-2 w-2" width={1.2}><path d="M1.500 2.500 4 5.500l2.500-3" /></Icon>
        </button>
      </div>
    </section>
  );
}

const STEPS = [0, 8, 16, 24, 32, 40, 48, 56];

function PreviewStack() {
  return (
    <section className="relative mb-4 mt-[17px] h-[159px] shrink-0 overflow-hidden rounded-l-[8px] bg-[#363638]">
      <svg viewBox="0 0 293 159" className="mx-auto block h-full" aria-hidden="true">
        <clipPath id="stack"><path d="M64 85H235V155.500H64z" /></clipPath>
        <path d="M64 88V155.500H151V138z" fill="#5a5a5c" />
        <path d="M235 88V155.500H151V138z" fill="#464648" />
        <g fill="none" strokeWidth="1.300" clipPath="url(#stack)">
          {STEPS.map((d) => (
            <path key={`l${d}`} stroke="#4d4d4f" d={`M64 ${97 + d}L142 ${140 + d}Q147 ${142 + d} 151 ${142 + d}`} />
          ))}
          {STEPS.map((d) => (
            <path key={`r${d}`} stroke="#3d3d3f" d={`M151 ${145 + d}L235 ${98 + d}`} />
          ))}
        </g>
        <path d="M142 43Q149 39 157 43L230 82Q235 86 235 90 234 93 230 96L158 136Q150 141 142 137L69 97Q63 92 64 88 64 84 69 81z" fill="#5c5c5e" stroke="#525254" strokeWidth=".8" />
        <path d="M142 54Q149 51 157 54L206 81Q213 87 206 93L157 118Q150 121 142 118L92 93Q85 87 92 81z" fill="none" stroke="#555557" strokeWidth="1.200" />
      </svg>
      <button aria-label="Replier l'aperçu" className="absolute right-[2px] top-[13px]">
        <Icon box={8} className="h-[9px] w-[6px] text-white" width={1.6}><path d="M1 .8 4 3 7 .8M1 4.800 4 7 7 4.800" /></Icon>
      </button>
    </section>
  );
}

export default function App() {
  return (
    <div className="flex h-screen flex-col overflow-hidden bg-[#373739] font-['Noto_Sans',sans-serif]">
      <TitleBar />
      <div className="flex min-h-0 flex-1">
        <Viewport />
        <aside className="flex w-[293px] shrink-0 flex-col bg-[#4b4b4d]">
          <FilamentSection />
          <ProcessHeader />
          <Settings />
          <PreviewStack />
        </aside>
      </div>
    </div>
  );
}
